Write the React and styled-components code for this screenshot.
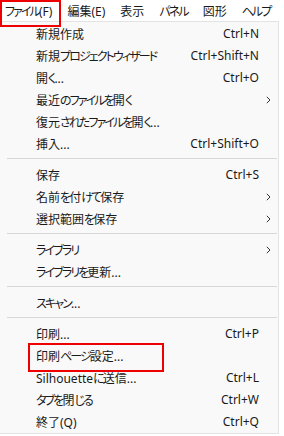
import React from "react"
import styled, { createGlobalStyle } from "styled-components"

const GlobalStyle = createGlobalStyle`
  html, body {
    margin: 0;
    padding: 0;
    background: #ffffff;
  }
  body {
    font-family: "Noto Sans", "Noto Sans CJK JP", sans-serif;
    font-size: 12px;
    color: #1a1a1a;
  }
`

const Screen = styled.div`
  width: 284px;
  height: 436px;
  position: relative;
  overflow: hidden;
  background: #ffffff;
`

const MenuBar = styled.div`
  display: flex;
  align-items: center;
  height: 21px;
  padding-left: 5px;
  background: #ffffff;
`

const BarItem = styled.div`
  position: relative;
  height: 21px;
  line-height: 24px;
  padding: 0 7.5px;
  white-space: nowrap;

  &:first-child {
    padding-left: 0;
  }
`

// kana in the UI font are narrow; palt + tightening gets close
const Kana = styled.span`
  font-feature-settings: "palt";
  letter-spacing: -1.9px;
`

const ActiveFrame = styled.div`
  position: absolute;
  left: 0;
  top: 0;
  width: 61px;
  height: 27px;
  box-sizing: border-box;
  border: 2px solid #ee0000;
  z-index: 2;
`

const Panel = styled.div`
  width: 279px;
  box-sizing: border-box;
  background: #f9f9f9;
  border: 1px solid #e3e3e3;
  border-left: none;
  padding: 0 0 1px 0;
`

const Row = styled.div`
  position: relative;
  display: flex;
  align-items: center;
  height: 22px;
  padding-left: 36px;
  padding-top: 1px;
  box-sizing: border-box;
  white-space: nowrap;
`

const Label = styled.span`
  flex: 1;
`

const Shortcut = styled.span`
  width: 100px;
  text-align: right;
`

const ArrowCell = styled.span`
  width: 19px;
  display: flex;
  justify-content: center;
  align-items: center;
`

const Separator = styled.div`
  height: 9px;
  display: flex;
  align-items: center;
  padding: 0 1px 0 7px;

  &::after {
    content: "";
    flex: 1;
    height: 1px;
    background: #d8d8d8;
  }
`

const Highlight = styled.div`
  position: absolute;
  left: 28px;
  top: -1px;
  width: 136px;
  height: 29px;
  box-sizing: border-box;
  border: 2px solid #ee0000;
`

const Chevron = () => (
  <svg width="5" height="8" viewBox="0 0 5 8">
    <path d="M0.8 0.8 L4 4 L0.8 7.2" fill="none" stroke="#333" strokeWidth="1" />
  </svg>
)

const Text = ({ children }) =>
  children
    .split(/([\u3040-\u30ff]+)/)
    .filter(Boolean)
    .map((part, i) =>
      /[\u3040-\u30ff]/.test(part) ? <Kana key={i}>{part}</Kana> : <span key={i}>{part}</span>
    )

const bar = ["ファイル(F)", "編集(E)", "表示", "パネル", "図形", "ヘルプ"]

const items = [
  { label: "新規作成", key: "Ctrl+N" },
  { label: "新規プロジェクトウィザード", key: "Ctrl+Shift+N" },
  { label: "開く...", key: "Ctrl+O" },
  { label: "最近のファイルを開く", sub: true },
  { label: "復元されたファイルを開く..." },
  { label: "挿入...", key: "Ctrl+Shift+O" },
  { sep: true },
  { label: "保存", key: "Ctrl+S" },
  { label: "名前を付けて保存", sub: true },
  { label: "選択範囲を保存", sub: true },
  { sep: true },
  { label: "ライブラリ", sub: true },
  { label: "ライブラリを更新..." },
  { sep: true },
  { label: "スキャン..." },
  { sep: true },
  { label: "印刷...", key: "Ctrl+P" },
  { label: "印刷ページ設定...", marked: true },
  { label: "Silhouetteに送信...", key: "Ctrl+L" },
  { label: "タブを閉じる", key: "Ctrl+W" },
  { label: "終了(Q)", key: "Ctrl+Q" },
]

export default function App() {
  return (
    <Screen>
      <GlobalStyle />
      <MenuBar>
        {bar.map(b => (
          <BarItem key={b}>
            <Text>{b}</Text>
          </BarItem>
        ))}
      </MenuBar>
      <ActiveFrame />
      <Panel>
        {items.map((it, i) =>
          it.sep ? (
            <Separator key={i} />
          ) : (
            <Row key={i}>
              <Label>
                <Text>{it.label}</Text>
              </Label>
              <Shortcut>{it.key || ""}</Shortcut>
              <ArrowCell>{it.sub ? <Chevron /> : null}</ArrowCell>
              {it.marked && <Highlight />}
            </Row>
          )
        )}
      </Panel>
    </Screen>
  )
}
